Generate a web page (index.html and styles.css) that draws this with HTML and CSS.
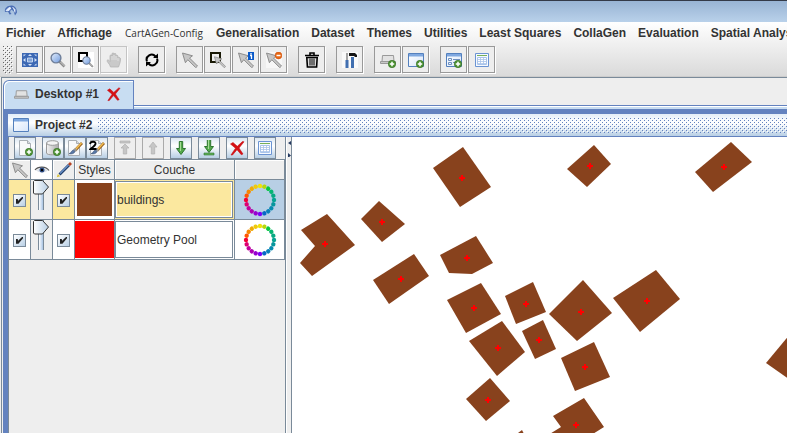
FILE: index.html
```html
<!DOCTYPE html>
<html lang="fr">
<head>
<meta charset="utf-8">
<title>CartAGen</title>
<link rel="stylesheet" href="styles.css">
</head>
<body>
<svg class="defs" aria-hidden="true">
  <defs>
    <linearGradient id="lens" x1="0" y1="0" x2="1" y2="1"><stop offset="0" stop-color="#e4eefc"/><stop offset="1" stop-color="#6f9ade"/></linearGradient>
    <linearGradient id="pane" x1="0" y1="0" x2="1" y2="1"><stop offset="0" stop-color="#fff"/><stop offset="1" stop-color="#d8e6fa"/></linearGradient>
    <linearGradient id="steel" x1="0" y1="0" x2="1" y2="0"><stop offset="0" stop-color="#f4f4f4"/><stop offset="1" stop-color="#aaa"/></linearGradient>
    <symbol id="plus" viewBox="0 0 8 8"><circle cx="4" cy="4" r="3.7" fill="#4f9434" stroke="#2f6b1d" stroke-width=".6"/><path d="M4 1.8v4.4M1.8 4h4.4" stroke="#fff" stroke-width="1.5"/></symbol>
    <symbol id="arrow" viewBox="0 0 16 16"><path d="M.5 1l10 2.8-3 2.2 8 8-1.7 1.7-8-8-2.4 3z" fill="#c6c6c6" stroke="#858585" stroke-width=".9"/></symbol>
    <symbol id="glass" viewBox="0 0 16 16"><path d="M9.5 9.5l5 5" stroke="#8a8a8a" stroke-width="2.6"/><path d="M10.5 10l4 4" stroke="#d0d0d0"/><circle cx="6" cy="6" r="4.9" fill="url(#lens)" stroke="#6f7f9a" stroke-width="1.4"/></symbol>
    <symbol id="window" viewBox="0 0 16 16"><path d="M.5 1.5h15v13H.5z" fill="url(#pane)" stroke="#5480bd"/><path d="M1 2h14v2.5H1z" fill="#7fa8e0"/></symbol>
    <symbol id="laptop" viewBox="0 0 16 16"><path d="M2.500 4.500h11l.5 6H2z" fill="#e2e2e2" stroke="#999"/><path d="M.5 10.500h15v2H.5z" fill="#c8c8c8" stroke="#999"/></symbol>
    <symbol id="sheet" viewBox="0 0 16 16"><path d="M1.500 1.500h13v13h-13z" fill="#f6faff" stroke="#6b94d3"/><path d="M3 3.500h10" stroke="#76b05a"/><path d="M3.500 5.500h9v7h-9z" fill="#fff" stroke="#a9c4ea"/><path d="M3.500 7.500h9M3.500 9.500h9M3.500 11.500h9M6.500 5.500v7M9.500 5.500v7" fill="none" stroke="#a9c4ea" stroke-width=".8"/></symbol>
    <symbol id="page" viewBox="0 0 16 16"><path d="M2.5.5h8l3 3v12h-11z" fill="#f8f9fa" stroke="#a9afb5"/><path d="M10.5.5v3h3" fill="#ddd" stroke="#a9afb5"/></symbol>
    <symbol id="brush" viewBox="0 0 16 16"><path d="M15 1L8 8.5" stroke="#98621f" stroke-width="2.8"/><path d="M14.5 1L8.5 7.5" stroke="#f2bd52" stroke-width="1.5"/><path d="M9 7L7 9" stroke="#999" stroke-width="3"/><path d="M6.3 8c-2 .5-2 3-4.300 3.700 2.700.7 5.500-.2 6-2.200z" fill="#5878a8" stroke="#3e5575" stroke-width=".6"/></symbol>
    <symbol id="cross" viewBox="0 0 16 16"><path d="M1.500 4l2.500-1.500 4.300 3.800L13.500 1.500l1.500.3L10 8l4 6-1.700.7L8 9.700 3.500 15H2l4.500-6.800z" fill="#d60f14" stroke="#c41014" stroke-width=".6"/></symbol>
    <symbol id="down" viewBox="0 0 16 16"><path d="M6.300 1.500h3.400v7h2.800L8 14.500 3.500 8.500h2.800z" fill="#55a94b" stroke="#2e7730"/><path d="M7.500 2v9" stroke="#a6dc98"/></symbol>
    <symbol id="wheel" viewBox="0 0 34 34">
      <circle cx="17" cy="3" r="2.200" fill="#efe30b"/>
      <circle cx="17" cy="3" r="2.200" fill="#b7d80a" transform="rotate(18 17 17)"/>
      <circle cx="17" cy="3" r="2.200" fill="#08c842" transform="rotate(36 17 17)"/>
      <circle cx="17" cy="3" r="2.200" fill="#07b573" transform="rotate(54 17 17)"/>
      <circle cx="17" cy="3" r="2.200" fill="#08a983" transform="rotate(72 17 17)"/>
      <circle cx="17" cy="3" r="2.200" fill="#08a294" transform="rotate(90 17 17)"/>
      <circle cx="17" cy="3" r="2.200" fill="#08969d" transform="rotate(108 17 17)"/>
      <circle cx="17" cy="3" r="2.200" fill="#078bae" transform="rotate(126 17 17)"/>
      <circle cx="17" cy="3" r="2.200" fill="#0780bb" transform="rotate(144 17 17)"/>
      <circle cx="17" cy="3" r="2.200" fill="#0768c6" transform="rotate(162 17 17)"/>
      <circle cx="17" cy="3" r="2.200" fill="#7d00f4" transform="rotate(180 17 17)"/>
      <circle cx="17" cy="3" r="2.200" fill="#9700cf" transform="rotate(198 17 17)"/>
      <circle cx="17" cy="3" r="2.200" fill="#ad00b4" transform="rotate(216 17 17)"/>
      <circle cx="17" cy="3" r="2.200" fill="#c4009a" transform="rotate(234 17 17)"/>
      <circle cx="17" cy="3" r="2.200" fill="#dd0072" transform="rotate(252 17 17)"/>
      <circle cx="17" cy="3" r="2.200" fill="#f20038" transform="rotate(270 17 17)"/>
      <circle cx="17" cy="3" r="2.200" fill="#ff5600" transform="rotate(288 17 17)"/>
      <circle cx="17" cy="3" r="2.200" fill="#f78500" transform="rotate(306 17 17)"/>
      <circle cx="17" cy="3" r="2.200" fill="#efab08" transform="rotate(324 17 17)"/>
      <circle cx="17" cy="3" r="2.200" fill="#efcb0b" transform="rotate(342 17 17)"/>
    </symbol>
    <path id="pin" d="M-3 0h6M0-3v6" stroke="#f00" stroke-width="2"/>
  </defs>
</svg>

<header class="titlebar">
  <svg class="logo" viewBox="0 0 14 14"><path d="M1 8C0 4 4 1 8 1.500c3 .5 5 3 5 7l-2 3-1.500-4.500L7 5.500 6 8l1.500 2-2 .5L4 7.500z" fill="#4c6fb5"/><path d="M2 6.500l3-3 2 .5-2 2.500zM8.500 3l2.500 2.500v3" fill="#e9f1ff" stroke="#e9f1ff" stroke-width=".8"/></svg>
</header>

<div class="top">
  <nav class="menubar">
    <button>Fichier</button><button>Affichage</button><button class="light">CartAGen-Config</button><button>Generalisation</button><button>Dataset</button><button>Themes</button><button>Utilities</button><button>Least Squares</button><button>CollaGen</button><button>Evaluation</button><button>Spatial Analysis</button>
  </nav>
  <div class="toolbar" role="toolbar">
    <span class="grip"></span>
    <div class="group">
      <button aria-label="Zoom to extent"><svg viewBox="0 0 16 16"><path d="M0 1h16v14H0z" fill="#3c68b4"/><path d="M5.500 6h5v4h-5z" fill="#7fa3d8" stroke="#dce8fa" stroke-width=".8"/><path d="M8 2l2 2H6zM8 14l-2-2h4zM1 8l2.500-2v4zM15 8l-2.500-2v4zM1.500 2.500h2.500l-2.500 2zM14.500 2.500H12l2.500 2zM1.500 13.500h2.500l-2.500-2zM14.500 13.500H12l2.500-2z" fill="#d6e4f8"/></svg></button>
      <button aria-label="Zoom"><svg><use href="#glass"/></svg></button>
      <button aria-label="Zoom to box"><svg viewBox="0 0 16 16"><path d="M0 0h16v16H0z" fill="#fff"/><path d="M1 1h8v8H1z" fill="none" stroke="#000" stroke-width="2"/><use href="#glass" x="4" y="4" width="12" height="12"/></svg></button>
      <button aria-label="Pan" disabled><svg viewBox="0 0 16 16"><path d="M4.500 15C4 12 .5 9.500 1 8.500s2-.5 3 1V4c0-1.500 2-1.500 2 0V2c0-1.500 2-1.500 2 0v.5c0-1.500 2-1.500 2 0V4c.5-1 2-1 2 .5V6c1-1 2.500-.5 2.500 1 0 3-1 5-2 8z" fill="#c9c9c9" stroke="#b4b4b4" stroke-width=".8"/><path d="M6 4v4M8 3v5M10 4v4M12 6v3" stroke="#e8e8e8" stroke-width=".7"/></svg></button>
    </div>
    <div class="group"><button aria-label="Refresh"><svg viewBox="0 0 16 16"><path d="M3 9.500A5 5 0 0 1 11.500 4.500M13 6.500A5 5 0 0 1 4.500 11.500" fill="none" stroke="#000" stroke-width="2"/><path d="M9 6h5V1.500zM7 10H2v4.500z"/></svg></button></div>
    <div class="group">
      <button aria-label="Select"><svg><use href="#arrow"/></svg></button>
      <button aria-label="Select by area"><svg viewBox="0 0 16 16"><path d="M1 1h9v9H1z" fill="#eee" stroke="#191905" stroke-width="2"/><use href="#arrow" x="4" y="4" width="12" height="12"/></svg></button>
      <button aria-label="Information"><svg viewBox="0 0 16 16"><use href="#arrow"/><path d="M10 0h6v8h-6z" fill="#0858c8"/><path d="M12 3.500h1.500V7M13 1v1.500" stroke="#fff" fill="none" stroke-width="1.300"/></svg></button>
      <button aria-label="Deselect"><svg viewBox="0 0 16 16"><path d="M0 0h16v16H0z" fill="#f7f7f7"/><use href="#arrow"/><circle cx="12.500" cy="3.500" r="3.400" fill="#e86712" stroke="#c4490a" stroke-width=".5"/><path d="M10.500 3.500h4" stroke="#fff" stroke-width="1.500"/></svg></button>
    </div>
    <div class="group"><button aria-label="Delete"><svg viewBox="0 0 16 16"><path d="M1 3.500h14M6 3V1h4v2" fill="none" stroke="#000" stroke-width="1.600"/><path d="M2.800 5.500h10.400l-.6 9.500H3.400z" fill="#ddd" stroke="#000" stroke-width="1.600"/><path d="M6 6.500v7M8 6.500v7M10 6.500v7" stroke="#000"/></svg></button></div>
    <div class="group"><button aria-label="Tools"><svg viewBox="0 0 16 16"><path d="M0 0h16v16H0z" fill="#fafafa"/><path d="M5 1v7" stroke="#888" stroke-width="1.500"/><path d="M5 8v8M10.500 5v11" stroke="#416fb0" stroke-width="3"/><path d="M7 1h6l2 2v2h-2l-1-1H7z" fill="#151515"/></svg></button></div>
    <div class="group">
      <button aria-label="New desktop"><svg viewBox="0 0 16 16"><use href="#laptop" y="-1"/><use href="#plus" x="8" y="8" width="8" height="8"/></svg></button>
      <button aria-label="New project"><svg viewBox="0 0 16 16"><use href="#window"/><use href="#plus" x="8" y="8" width="8" height="8"/></svg></button>
    </div>
    <div class="group">
      <button aria-label="New form"><svg viewBox="0 0 16 16"><use href="#window"/><path d="M2.500 6.500h3v2h-3zM2.500 10.500h3v2h-3zM7 7.500h7M7 10.500h4" stroke="#6d8fbe" fill="none"/><use href="#plus" x="8" y="8" width="8" height="8"/></svg></button>
      <button aria-label="Attribute table"><svg><use href="#sheet"/></svg></button>
    </div>
  </div>
</div>

<main class="desktop">
  <div class="tabs">
    <div class="tab">
      <svg><use href="#laptop"/></svg><span>Desktop #1</span>
      <button aria-label="Close desktop"><svg><use href="#cross"/></svg></button>
    </div>
    <div class="tabline"></div>
  </div>
  <section class="frame">
    <header class="frame-title"><svg><use href="#window"/></svg><h1>Project #2</h1><span class="dots"></span></header>
    <div class="split">
      <aside class="layers">
        <div class="layerbar" role="toolbar">
          <div><button aria-label="New layer"><svg viewBox="0 0 16 16"><use href="#page"/><use href="#plus" x="8" y="8" width="8" height="8"/></svg></button></div>
          <div>
            <button aria-label="Add database layer"><svg viewBox="0 0 16 16"><path d="M1.500 3v10c0 2.500 12 2.500 12 0V3" fill="url(#steel)" stroke="#999"/><ellipse cx="7.500" cy="3" rx="6" ry="2.300" fill="#f4f4f4" stroke="#999"/><use href="#plus" x="8" y="8" width="8" height="8"/></svg></button>
            <button aria-label="Edit style"><svg viewBox="0 0 16 16"><use href="#page" x="-1"/><use href="#brush" y="2"/></svg></button>
            <button aria-label="Edit second style"><svg viewBox="0 0 16 16"><use href="#page" x="-1"/><use href="#brush" y="2"/><path d="M1 4c.5-3 6-3 5.500 0-.3 2-3 3-5 5h6" fill="none" stroke="#000" stroke-width="1.800"/></svg></button>
          </div>
          <div><button aria-label="Move to top" disabled><svg viewBox="0 0 16 16"><path d="M3 1h10v2H3zM8 4l4 4H9.700v6H6.300V8H4z" fill="#c6c6c6" stroke="#b0b0b0" stroke-width=".7"/></svg></button></div>
          <div><button aria-label="Move up" disabled><svg viewBox="0 0 16 16"><path d="M8 2l4 5H9.700v7H6.300V7H4z" fill="#c6c6c6" stroke="#b0b0b0" stroke-width=".7"/></svg></button></div>
          <div><button aria-label="Move down"><svg><use href="#down"/></svg></button></div>
          <div><button aria-label="Move to bottom"><svg viewBox="0 0 16 16"><use href="#down" y="-2"/><path d="M3 13h10v2H3z" fill="#63b05b" stroke="#2e7730" stroke-width=".6"/></svg></button></div>
          <div><button aria-label="Remove layer"><svg><use href="#cross"/></svg></button></div>
          <div><button aria-label="Layer attributes"><svg><use href="#sheet"/></svg></button></div>
        </div>
        <table>
          <colgroup><col class="c-pick"><col class="c-pick"><col class="c-pick"><col class="c-style"><col><col class="c-wheel"></colgroup>
          <thead><tr>
            <th aria-label="Selectable"><svg><use href="#arrow"/></svg></th>
            <th class="eye" aria-label="Visible"><svg viewBox="0 0 16 16"><path d="M2 8.500C5 5 11 5 14 8.500 11 11 5 11 2 8.500z" fill="#dce2ea"/><path d="M1 8C4 4 12 4 15 8.500" fill="none" stroke="#555" stroke-width="1.200"/><circle cx="8" cy="8" r="2.500" fill="#304f87"/><circle cx="8" cy="8" r="1.200"/></svg></th>
            <th aria-label="Editable"><svg viewBox="0 0 16 16"><path d="M3.500 12.500L13 3" stroke="#1d3a66" stroke-width="2.800"/><path d="M4 11.500L13 2.500" stroke="#6b93cc" stroke-width="1.200"/><path d="M13 3l2-2" stroke="#b54324" stroke-width="2.800"/><path d="M.8 15.200l1-3.200 2.400 2.200z" fill="#d9c23a"/></svg></th>
            <th>Styles</th><th>Couche</th><th></th>
          </tr></thead>
          <tbody>
            <tr class="selected">
              <td><input type="checkbox" checked aria-label="buildings selectable"></td>
              <td class="opacity"><input type="range" value="100" aria-label="buildings opacity"></td>
              <td><input type="checkbox" checked aria-label="buildings editable"></td>
              <td class="style"><button class="swatch brown" aria-label="buildings style"></button></td>
              <td class="name"><input type="text" value="buildings" aria-label="Layer name"></td>
              <td class="wheel"><button aria-label="buildings colours"><svg><use href="#wheel"/></svg></button></td>
            </tr>
            <tr>
              <td><input type="checkbox" checked aria-label="Geometry Pool selectable"></td>
              <td class="opacity"><input type="range" value="100" aria-label="Geometry Pool opacity"></td>
              <td><input type="checkbox" checked aria-label="Geometry Pool editable"></td>
              <td class="style"><button class="swatch red" aria-label="Geometry Pool style"></button></td>
              <td class="name"><input type="text" value="Geometry Pool" aria-label="Layer name"></td>
              <td class="wheel"><button aria-label="Geometry Pool colours"><svg><use href="#wheel"/></svg></button></td>
            </tr>
          </tbody>
        </table>
      </aside>
      <div class="divider"><svg viewBox="0 0 4 20"><path d="M4 4v4L1 6zM1 16v5l3-2.500z" fill="#25395f"/></svg></div>
      <svg class="map" role="img" aria-label="Map of buildings">
        <g transform="translate(-292 -137)">
          <g fill="#88421d">
            <path d="M433 168L463 147 491 187 460 207z"/>
            <path d="M361 219L379 201 405 224 382 242z"/>
            <path d="M301 230L327 214 355 245 312 276 300 263 315 246z"/>
            <path d="M373 280L414 254 429 276 389 304z"/>
            <path d="M440 255L476 236 493 263 472 274 449 273z"/>
            <path d="M567 169L594 145 611 164 587 187z"/>
            <path d="M695 172L731 142 752 162 713 192z"/>
            <path d="M447 300L481 283 501 314 466 333z"/>
            <path d="M505 296L533 282 546 312 516 324z"/>
            <path d="M549 314L583 280 612 313 577 341z"/>
            <path d="M613 298L656 270 680 299 640 332z"/>
            <path d="M469 341L502 321 525 352 497 376z"/>
            <path d="M522 331L543 320 556 349 535 359z"/>
            <path d="M561 358L594 342 610 377 575 391z"/>
            <path d="M466 399L490 378 510 401 486 421z"/>
            <path d="M553 416L584 398 604 427 580 442 540 440 561 427z"/>
            <path d="M514 436L522 430 525 436z"/>
            <path d="M766 363L800 322 800 387z"/>
          </g>
          <use href="#pin" x="462" y="178"/><use href="#pin" x="382" y="222"/><use href="#pin" x="325" y="244"/><use href="#pin" x="401" y="279"/><use href="#pin" x="467" y="258"/><use href="#pin" x="590" y="166"/><use href="#pin" x="724" y="167"/><use href="#pin" x="474" y="308"/><use href="#pin" x="526" y="304"/><use href="#pin" x="581" y="312"/><use href="#pin" x="647" y="301"/><use href="#pin" x="498" y="348"/><use href="#pin" x="539" y="340"/><use href="#pin" x="585" y="367"/><use href="#pin" x="488" y="400"/><use href="#pin" x="576" y="425"/>
        </g>
      </svg>
    </div>
  </section>
</main>
</body>
</html>
```
FILE: styles.css
```css
* { box-sizing: border-box; }

:root {
  --line: #7a8a99;
  --blue: #6382bf;
  --grey: #eee;
}

body {
  margin: 0;
  height: 100vh;
  display: flex;
  flex-direction: column;
  overflow: hidden;
  background: var(--grey);
  color: #333;
  font: 12px "Liberation Sans", Arial, sans-serif;
}

button, input { font: inherit; color: inherit; margin: 0; }
button { padding: 0; border: 0; background: none; }
svg { display: block; width: 16px; height: 16px; flex: none; }
.defs { position: absolute; width: 0; height: 0; }

.titlebar {
  height: 22px;
  flex: none;
  padding: 3px 4px;
  border-top: 1px solid #333a48;
  background: linear-gradient(#98b4d4, #b9d1ea);
}
.logo { width: 14px; height: 14px; }

.top {
  flex: none;
  background: linear-gradient(#fff, #dadada);
  border-bottom: 1px solid #ccc;
}
.menubar {
  display: flex;
  gap: 12px;
  height: 22px;
  padding-left: 6px;
  overflow: hidden;
}
.menubar button { font-weight: bold; white-space: nowrap; flex: none; }
.menubar .light { padding: 0 1px; font: 10px "Open Sans", sans-serif; }

.toolbar {
  display: flex;
  gap: 10px;
  padding: 2px 0 2px 3px;
}
.grip {
  width: 10px;
  margin-right: -7px;
  background: url("data:image/svg+xml,%3Csvg xmlns='http://www.w3.org/2000/svg' width='4' height='4'%3E%3Cpath d='M0 0h1v1H0zM2 2h1v1H2z' fill='%23666'/%3E%3Cpath d='M1 1h1v1H1zM3 3h1v1H3z' fill='%23fff'/%3E%3C/svg%3E");
}
.group { display: flex; }
.group button {
  width: 27px;
  height: 27px;
  margin: 0 1px 1px 0;
  display: grid;
  place-items: center;
  border: 1px solid #999;
  background: #eee;
  box-shadow: 1px 1px #fff;
}
.group button:disabled { border-color: #c4c4c4; }

.desktop {
  flex: 1;
  min-height: 0;
  margin-left: 1px;
  display: flex;
  flex-direction: column;
  border: solid var(--line);
  border-width: 1px 0 0 1px;
}
.tabs {
  display: flex;
  height: 31px;
  flex: none;
  padding: 2px 0 0 1px;
}
.tab {
  display: flex;
  align-items: center;
  gap: 6px;
  padding: 0 12px 2px 10px;
  border: 1px solid var(--blue);
  border-bottom: 0;
  border-top-left-radius: 6px;
  background: #c8ddf2;
  box-shadow: inset 1px 1px #fff;
  font-weight: bold;
}
.tab button { margin-left: 1px; }
.tab svg { width: 15px; }
.tabline {
  flex: 1;
  height: 4px;
  align-self: flex-end;
  border-top: 1px solid var(--blue);
  background: linear-gradient(#fff 1px, #c8ddf2 1px);
}

.frame {
  flex: 1;
  min-height: 0;
  display: flex;
  flex-direction: column;
  margin-left: 1px;
  border: solid var(--blue);
  border-width: 5px 0 0 5px;
}
.frame-title {
  display: flex;
  align-items: center;
  gap: 6px;
  height: 23px;
  flex: none;
  padding-left: 5px;
  border-bottom: 1px solid var(--blue);
  background: linear-gradient(#e4eef8, #fff 40%, #b8cfe5);
}
.frame-title h1 { margin: 0; font-size: 12px; }
.dots {
  flex: 1;
  height: 15px;
  background: url("data:image/svg+xml,%3Csvg xmlns='http://www.w3.org/2000/svg' width='4' height='4'%3E%3Cpath d='M0 0h1v1H0zM2 2h1v1H2z' fill='%236382bf'/%3E%3Cpath d='M1 1h1v1H1zM3 3h1v1H3z' fill='%23fff'/%3E%3C/svg%3E");
}

.split { flex: 1; min-height: 0; display: flex; }
.layers {
  width: 278px;
  flex: none;
  border: solid var(--line);
  border-width: 0 1px;
}
.layerbar {
  display: flex;
  gap: 6px;
  height: 22px;
  padding-left: 5px;
}
.layerbar div { display: flex; }
.layerbar button {
  width: 22px;
  height: 22px;
  display: grid;
  place-items: center;
  border: 1px solid var(--line);
  background: linear-gradient(#dde8f3, #fff 40%, #b8cfe5);
}
.layerbar button:disabled { background: #eee; border-color: #aaa; }

table { width: 100%; border-collapse: separate; border-spacing: 0; table-layout: fixed; }
.c-pick { width: 22px; }
.c-style { width: 40px; }
.c-wheel { width: 50px; }
th {
  height: 21px;
  padding: 0;
  border: 1px solid var(--line);
  border-left: 0;
  font-weight: normal;
  box-shadow: inset 1px 1px #fff;
}
th svg { margin: auto; }
.eye { background: #fff; }
td {
  height: 40px;
  padding: 0;
  border: solid var(--line);
  border-width: 0 1px 1px 0;
  background: #fff;
  text-align: center;
}
td > * { vertical-align: middle; }
.selected td { background: #fbe89f; }
.selected .style { background: #fff; }
td.opacity, .selected td.opacity { background: #eee; vertical-align: top; }
.selected .wheel { background: #b8cfe5; }

input[type="checkbox"] {
  appearance: none;
  position: relative;
  width: 13px;
  height: 13px;
  border: 1px solid var(--line);
  background: linear-gradient(135deg, #fff, #b8cfe5);
}
input[type="checkbox"]:checked::after {
  content: "";
  position: absolute;
  inset: 2px;
  background: #222;
  clip-path: polygon(0 35%, 25% 35%, 30% 60%, 90% 0, 100% 0, 100% 22%, 35% 100%, 0 100%);
}
input[type="range"] {
  appearance: none;
  writing-mode: vertical-lr;
  direction: rtl;
  display: block;
  width: 16px;
  height: 31px;
  margin: 0 0 0 2px;
  background: linear-gradient(90deg, var(--line) 1px, #fff 1px, #a9c4e4 5px, var(--line) 5px) 5px 0 / 6px 30px no-repeat;
}
input[type="range"]::-webkit-slider-thumb {
  appearance: none;
  width: 16px;
  height: 15px;
  background: url("data:image/svg+xml,%3Csvg xmlns='http://www.w3.org/2000/svg' width='16' height='15'%3E%3ClinearGradient id='g'%3E%3Cstop stop-color='%23fff'/%3E%3Cstop offset='1' stop-color='%23b8cfe5'/%3E%3C/linearGradient%3E%3Cpath d='M.5 1.500l1-1h8l6 6.500-6 7h-8l-1-1z' fill='url(%23g)' stroke='%23333'/%3E%3C/svg%3E");
}
.swatch { display: block; width: 35px; height: 33px; margin: auto; }
.brown { background: #88421d; }
.red { width: 39px; height: 37px; background: #f00; }
input[type="text"] {
  display: block;
  width: calc(100% - 1px);
  height: 37px;
  padding: 0 1px;
  border: 1px solid var(--line);
  background: none;
  box-shadow: inset 0 0 0 1px #fff;
}
.wheel button, .wheel svg { display: block; width: 34px; height: 34px; margin: auto; }

.divider { width: 6px; flex: none; border-left: 1px solid #fff; border-right: 1px solid var(--line); }
.divider svg { width: 4px; height: 20px; }
.map { flex: 1; min-width: 0; width: auto; height: 100%; background: #fff; }
```
